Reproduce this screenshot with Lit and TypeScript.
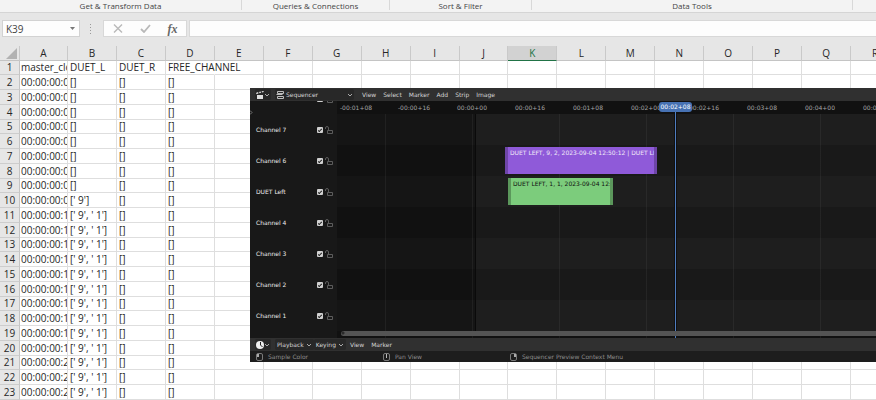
import { LitElement, html, css, svg } from "lit";
import { customElement } from "lit/decorators.js";

const COLUMNS = "ABCDEFGHIJKLMNOPQR".split("");
const HEADINGS = ["master_clo", "DUET_L", "DUET_R", "FREE_CHANNEL"];

const rowCells = (n: number): string[] => {
  if (n === 1) return HEADINGS;
  const clock = n < 11 ? "00:00:00:0" : n < 21 ? "00:00:00:1" : "00:00:00:2";
  const left = n < 10 ? "[]" : n === 10 ? "[' 9']" : "[' 9', ' 1']";
  return [clock, left, "[]", "[]"];
};

@customElement("excel-sheet")
class ExcelSheet extends LitElement {
  static styles = css`
    :host {
      display: block;
      overflow: hidden;
      background: #e6e6e6;
      color: #262626;
      font-family: "Open Sans", "Noto Sans", sans-serif;
      font-size: 10px;
    }
    .ribbon {
      display: grid;
      grid-template-columns: 242px 148px 142px 1fr 23px;
      height: 12px;
      background: #f3f3f3;
      border-bottom: 1px solid #d5d5d5;
      font-size: 8px;
      line-height: 12px;
      text-align: center;
      color: #444;
    }
    .ribbon span {
      height: 10px;
      border-right: 1px solid #d8d8d8;
    }
    .ribbon span:last-child {
      border: 0;
    }
    .formula {
      display: flex;
      gap: 6px;
      height: 17px;
      padding: 7px 0 9px 2px;
    }
    .name {
      display: flex;
      align-items: center;
      justify-content: space-between;
      width: 78px;
      box-sizing: border-box;
      padding: 0 4px 0 3px;
      background: #fdfdfd;
      border: 1px solid #d2d2d2;
    }
    .name input {
      width: 50px;
      padding: 0;
      border: 0;
      outline: 0;
      background: none;
      font: inherit;
      color: #444;
    }
    .drop {
      padding: 0;
      border: 0;
      background: none;
      display: flex;
    }
    .dots {
      width: 11px;
    }
    .tools {
      display: flex;
      align-items: center;
      justify-content: space-around;
      width: 84px;
      margin-right: -4px;
      box-sizing: border-box;
      background: #fdfdfd;
      border: 1px solid #d8d8d8;
    }
    .tools button {
      padding: 0;
      border: 0;
      background: none;
      font: italic bold 12px/14px "Liberation Serif", serif;
      color: #666;
      display: flex;
    }
    .entry {
      flex: 1;
      min-width: 0;
      border: 1px solid #d8d8d8;
      border-right: 0;
      background: #fdfdfd;
      padding: 0;
      box-sizing: border-box;
    }
    table {
      width: calc(100% + 24px);
      table-layout: fixed;
      border-collapse: separate;
      border-spacing: 0;
    }
    .nums {
      width: 20px;
    }
    .first {
      width: 48px;
    }
    th,
    td {
      box-sizing: border-box;
      height: 15px;
      padding: 0;
      font-weight: 400;
      line-height: 14px;
      white-space: nowrap;
    }
    thead th {
      padding-top: 1px;
      line-height: 13px;
      border-right: 1px solid #c9c9c9;
      border-bottom: 1px solid #c4c4c4;
    }
    thead th.on {
      background: #d2d2d2;
      color: #217346;
      border-bottom: 1px solid #217346;
    }
    .corner svg {
      display: block;
      margin-left: 6px;
    }
    tbody th {
      background: #e6e6e6;
      border-right: 1px solid #c4c4c4;
      border-bottom: 1px solid #cdcdcd;
    }
    td {
      background: #fff;
      border-right: 1px solid #dedede;
      border-bottom: 1px solid #dedede;
    }
    tbody tr:nth-child(4n + 1) > * {
      height: 14px;
      line-height: 13px;
    }
    td span {
      display: block;
      padding-left: 2px;
    }
    td.clip span {
      overflow: hidden;
      padding-left: 1px;
    }
    td.open {
      border-right-color: transparent;
      overflow: visible;
    }
    td.open span {
      position: relative;
      z-index: 1;
    }
  `;

  render() {
    return html`
      <div class="ribbon">
        <span>Get &amp; Transform Data</span>
        <span>Queries &amp; Connections</span>
        <span>Sort &amp; Filter</span>
        <span>Data Tools</span>
        <span></span>
      </div>
      <div class="formula">
        <div class="name">
          <input aria-label="Name box" value="K39" />
          <button class="drop" aria-label="Choose a name">
            <svg width="5" height="3"><path d="M0 0h5L2.5 3z" fill="#777" /></svg>
          </button>
        </div>
        <svg class="dots" width="11" height="17" fill="#999">
          <rect x="4" y="4" width="1" height="1" /><rect x="4" y="7" width="1" height="1" />
          <rect x="4" y="10" width="1" height="1" /><rect x="4" y="13" width="1" height="1" />
        </svg>
        <div class="tools">
          <button aria-label="Cancel">
            <svg width="10" height="9" fill="none" stroke="#b9b9b9" stroke-width="1.4"><path d="M1 .5l8 8M9 .5l-8 8" /></svg>
          </button>
          <button aria-label="Enter">
            <svg width="11" height="9" fill="none" stroke="#b9b9b9" stroke-width="1.8"><path d="M1 5l3 3 6-7" /></svg>
          </button>
          <button aria-label="Insert function">fx</button>
        </div>
        <input class="entry" aria-label="Formula bar" />
      </div>
      <table>
        <colgroup>
          <col class="nums" />
          <col class="first" />
          ${COLUMNS.slice(1).map(() => html`<col />`)}
        </colgroup>
        <thead>
          <tr>
            <th class="corner"><svg width="11" height="11"><path d="M11 0v11H0z" fill="#b2b2b2" /></svg></th>
            ${COLUMNS.map((c) => html`<th scope="col" class=${c === "K" ? "on" : ""}>${c}</th>`)}
          </tr>
        </thead>
        <tbody>
          ${Array.from({ length: 23 }, (_, i) => {
            const cells = rowCells(i + 1);
            return html`<tr>
              <th scope="row">${i + 1}</th>
              ${COLUMNS.map(
                (_c, k) => html`<td class=${k === 0 ? "clip" : i === 0 && k === 3 ? "open" : ""}>
                  ${cells[k] ? html`<span>${cells[k]}</span>` : ""}
                </td>`
              )}
            </tr>`;
          })}
        </tbody>
      </table>
    `;
  }
}

const down = html`<svg width="6" height="4"><path d="M1 1l2 2 2-2" fill="none" stroke="#aaa" /></svg>`;

const mouse = (side: string) => html`<svg width="7" height="8" fill="none" stroke="#7a7a7a">
  <rect x=".5" y=".5" width="6" height="7" rx="1.5" />
  ${side === "left" ? svg`<rect x="1" y="1" width="2" height="3" fill="#aaa" stroke="none" />` : ""}
  ${side === "middle" ? svg`<rect x="3" y="1" width="1" height="4" fill="#bbb" stroke="none" />` : ""}
  ${side === "right" ? svg`<rect x="4" y="1" width="2" height="3" fill="#aaa" stroke="none" />` : ""}
</svg>`;

const CHANNELS = ["Channel 8", "Channel 7", "Channel 6", "DUET Left", "Channel 4", "Channel 3", "Channel 2", "Channel 1"];
const TIMES = ["-00:01+08", "-00:00+16", "00:00+00", "00:00+16", "00:01+08", "00:02+00", "00:02+16", "00:03+08", "00:04+00", "00:04+16"];

@customElement("video-sequencer")
class VideoSequencer extends LitElement {
  static styles = css`
    :host {
      display: block;
      overflow: hidden;
      background: #181818;
      color: #d4d4d4;
      font-family: "DejaVu Sans", sans-serif;
      font-size: 6px;
      line-height: 10px;
    }
    button {
      display: flex;
      align-items: center;
      gap: 2px;
      height: 11px;
      padding: 0 2px;
      border: 0;
      border-radius: 2px;
      background: none;
      color: inherit;
      font: inherit;
      white-space: nowrap;
    }
    .bar {
      display: flex;
      align-items: center;
      height: 13px;
      padding-left: 5px;
      background: #303030;
    }
    .box {
      background: #282828;
    }
    .type {
      gap: 0;
      padding: 0 1px;
      margin-right: 4px;
    }
    .mode {
      width: 79px;
      margin-right: 4px;
      padding: 0 1px;
    }
    .mode svg:last-child {
      margin-left: auto;
    }
    .menu {
      padding: 0 3px 0 4px;
    }
    .body {
      position: relative;
      display: grid;
      grid-template-columns: 87px 1fr;
      height: 237px;
      overflow: hidden;
    }
    .expand {
      position: absolute;
      left: 0;
      top: 9px;
    }
    .channels {
      display: flex;
      flex-direction: column;
      justify-content: flex-end;
      padding-bottom: 7px;
      overflow: hidden;
    }
    .channel {
      flex: none;
      display: flex;
      align-items: center;
      height: 31px;
      padding: 0 4px 0 6px;
      color: #ececec;
    }
    .channel label {
      flex: 1;
      display: flex;
      align-items: center;
      justify-content: space-between;
    }
    .channel input {
      appearance: none;
      width: 6px;
      height: 6px;
      margin: 0 2px 0 0;
      border-radius: 1px;
      background: #d0d0d0;
      display: grid;
      place-items: center;
    }
    .channel input::after {
      content: "";
      width: 3px;
      height: 1px;
      border: solid #222;
      border-width: 0 0 1px 1px;
      transform: rotate(-45deg);
    }
    .lock {
      padding: 0;
    }
    .stage {
      position: relative;
      overflow: hidden;
      background: #111;
    }
    .ruler {
      display: grid;
      grid-template-columns: repeat(10, 58px);
      height: 13px;
      margin-left: -10px;
      line-height: 13px;
      text-align: center;
      white-space: nowrap;
      color: #a4a4a4;
    }
    .track {
      height: 31px;
      background: linear-gradient(90deg, #111 138px, #0a0a0a 138px 139px, #191919 139px);
    }
    .track:nth-child(even) {
      background: linear-gradient(90deg, #151515 138px, #0a0a0a 138px 139px, #1e1e1e 139px);
    }
    .lines {
      position: absolute;
      inset: 13px 0 0 48px;
      background: repeating-linear-gradient(90deg, rgba(255, 255, 255, 0.05) 0 1px, transparent 1px 87px);
    }
    .strip {
      position: absolute;
      height: 27px;
      box-sizing: border-box;
      overflow: hidden;
      white-space: nowrap;
      padding: 1px 0 0 2px;
    }
    .purple {
      left: 168px;
      top: 46px;
      width: 152px;
      background: #8f5ad9;
      border: solid #6e45a8;
      border-width: 0 3px;
      color: #f0eaf8;
    }
    .green {
      left: 171px;
      top: 77px;
      width: 105px;
      background: #7ccc7c;
      border: solid #5b975b;
      border-width: 0 3px;
      color: #111;
    }
    .strip span {
      display: block;
      overflow: hidden;
    }
    .head {
      position: absolute;
      left: 337px;
      top: 10px;
      bottom: 0;
      width: 1px;
      background: #4f7dc0;
      border: solid #101010;
      border-width: 0 1px;
    }
    .stamp {
      position: absolute;
      left: 322px;
      top: 1px;
      width: 33px;
      border-radius: 3px;
      background: #4772b3;
      color: #fff;
      text-align: center;
    }
    .scroll {
      position: absolute;
      left: 4px;
      right: -4px;
      bottom: 2px;
      height: 5px;
      border-radius: 3px;
      background: radial-gradient(circle at 2px 2px, #2a2a2a 1px, #545454 2px);
    }
    .status {
      display: flex;
      align-items: center;
      height: 11px;
      padding-left: 6px;
      background: #1d1d1d;
      color: #8c8c8c;
    }
    .status span {
      display: flex;
      align-items: center;
      gap: 5px;
      width: 127px;
      white-space: nowrap;
    }
  `;

  render() {
    return html`
      <div class="bar">
        <button class="box type" aria-label="Editor type">
          <svg width="8" height="8" fill="#e0e0e0"><path d="M1 4h6v4H1zM0 2l2-1 .6 1.200L.6 3.300zM3 1l1.600-.6.6 1.200-1.600.7zM5.600.2L7.500 0l.3 1-1.700.5z" /></svg>
          ${down}
        </button>
        <button class="box mode">
          <svg width="8" height="8" fill="none" stroke="#bdbdbd"><path d="M1.500 .5h6v2h-6zM.5 3.500h6M1.500 5.500h6v2h-6z" /></svg>
          Sequencer ${down}
        </button>
        ${["View", "Select", "Marker", "Add", "Strip", "Image"].map((m) => html`<button class="menu">${m}</button>`)}
      </div>
      <div class="body">
        <div class="channels">
          ${CHANNELS.map(
            (c) => html`<div class="channel">
              <label>${c}<input type="checkbox" checked /></label>
              <button class="lock" aria-label="Lock ${c}">
                <svg width="8" height="8" fill="none" stroke="#5c5c5c"><path d="M.5 3V2a1.500 1.500 0 0 1 3 0v2M2.500 4.500h5v3h-5z" /></svg>
              </button>
            </div>`
          )}
        </div>
        <div class="stage">
          <div class="ruler">${TIMES.map((t) => html`<span>${t}</span>`)}</div>
          ${CHANNELS.slice(1).map(() => html`<div class="track"></div>`)}
          <div class="lines"></div>
          <div class="strip purple"><span>DUET LEFT, 9, 2, 2023-09-04 12:50:12 | DUET LEF</span></div>
          <div class="strip green"><span>DUET LEFT, 1, 1, 2023-09-04 12:</span></div>
          <div class="head"></div>
          <div class="stamp">00:02+08</div>
          <div class="scroll"></div>
        </div>
        <svg class="expand" width="4" height="5" fill="none" stroke="#777"><path d="M0 .5l2 2-2 2" /></svg>
      </div>
      <div class="bar">
        <button class="box type" aria-label="Editor type">
          <svg width="8" height="8"><circle cx="4" cy="4" r="4" fill="#eee" /><path d="M4.500 1v3l2 2" stroke="#222" fill="none" /></svg>
          ${down}
        </button>
        <button class="box">Playback ${down}</button>
        <button class="box">Keying ${down}</button>
        <button class="menu">View</button>
        <button class="menu">Marker</button>
      </div>
      <div class="status">
        <span>${mouse("left")}Sample Color</span>
        <span>${mouse("middle")}Pan View</span>
        <span>${mouse("right")}Sequencer Preview Context Menu</span>
      </div>
    `;
  }
}

@customElement("app-root")
class AppRoot extends LitElement {
  static styles = css`
    :host {
      display: block;
      position: relative;
      overflow: hidden;
    }
    video-sequencer {
      position: absolute;
      left: 250px;
      right: 0;
      top: 88px;
    }
  `;

  render() {
    return html`<excel-sheet></excel-sheet><video-sequencer></video-sequencer>`;
  }
}
